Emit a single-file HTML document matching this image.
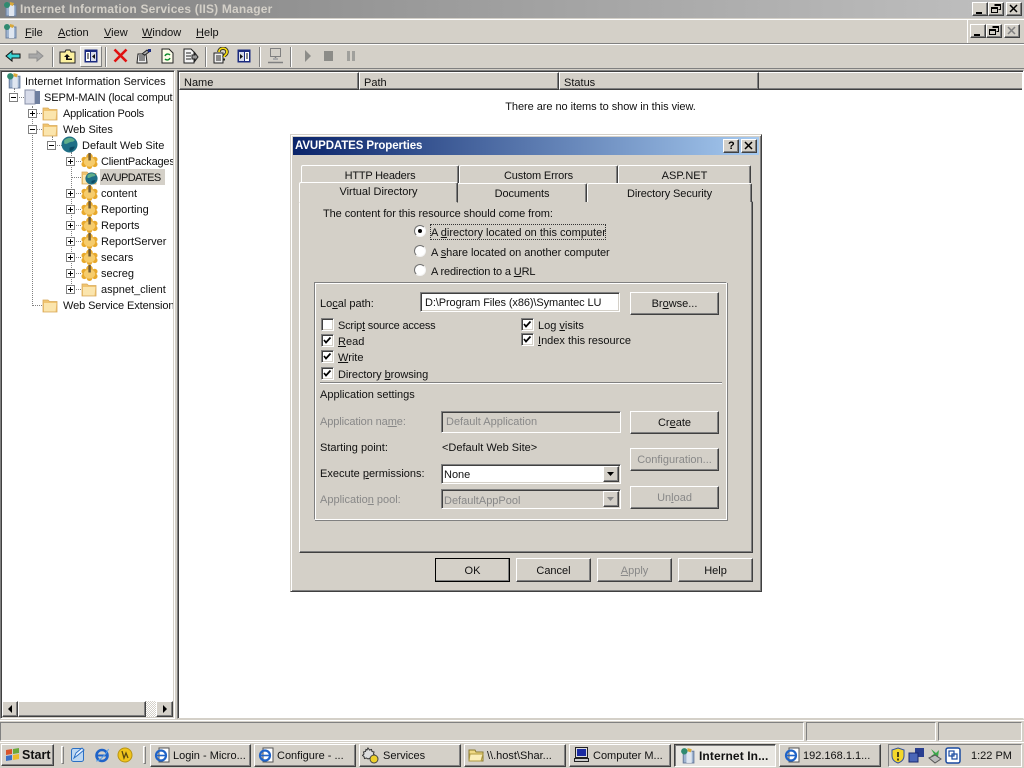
<!DOCTYPE html>
<html><head><meta charset="utf-8"><title>IIS Manager</title>
<style>
*{box-sizing:border-box}
html,body{margin:0;padding:0;width:1024px;height:768px;overflow:hidden;background:#d4d0c8}
body{position:relative;font:11px/13px "Liberation Sans",sans-serif;color:#111}
.a{position:absolute}
.t{position:absolute;white-space:nowrap;line-height:13px}
.g{color:#888}
.c{text-align:center}
.up{position:absolute;background:#d4d0c8;border:1px solid;border-color:#fff #404040 #404040 #fff;box-shadow:inset -1px -1px 0 #808080}
.sunk{position:absolute;border:1px solid;border-color:#808080 #fff #fff #808080;box-shadow:inset 1px 1px 0 #404040,inset -1px -1px 0 #d4d0c8;background:#fff}
.thin{position:absolute;border:1px solid;border-color:#808080 #fff #fff #808080}
.btn{position:absolute;background:#d4d0c8;border:1px solid;border-color:#fff #404040 #404040 #fff;box-shadow:inset -1px -1px 0 #808080;text-align:center;white-space:nowrap}
.chk{position:absolute;width:13px;height:13px;background:#fff;border:1px solid;border-color:#808080 #fff #fff #808080;box-shadow:inset 1px 1px 0 #404040,inset -1px -1px 0 #d4d0c8}
.chk svg{position:absolute;left:0;top:0}
.rad{position:absolute;width:12px;height:12px;border-radius:50%;background:#fff;border:1px solid;border-color:#707070 #f4f4f4 #f4f4f4 #707070}
.rad i{position:absolute;left:3px;top:3px;width:4px;height:4px;background:#000;border-radius:50%}
.tab{position:absolute;background:#d4d0c8;border-top:1px solid #fff;border-left:1px solid #fff;border-right:1px solid #404040;box-shadow:inset -1px 0 0 #808080;border-radius:2px 2px 0 0;text-align:center;white-space:nowrap}
.head{position:absolute;top:72px;height:18px;background:#d4d0c8;border:1px solid;border-color:#fff #404040 #404040 #fff;box-shadow:inset -1px -1px 0 #808080;padding:4px 0 0 4px}
.task{position:absolute;top:744px;height:23px;background:#d4d0c8;border:1px solid;border-color:#fff #404040 #404040 #fff;box-shadow:inset -1px -1px 0 #808080;white-space:nowrap;padding:5px 0 0 22px}
.dl{position:absolute;border-left:1px dotted #808080}
.dh{position:absolute;border-top:1px dotted #808080}
.box{position:absolute;width:9px;height:9px;border:1px solid #808080;background:#fff}
.box:before{content:"";position:absolute;left:1px;top:3px;width:5px;height:1px;background:#000}
.box.p:after{content:"";position:absolute;left:3px;top:1px;width:1px;height:5px;background:#000}
.ic{position:absolute}
.wb{position:absolute;width:16px;height:14px;background:#d4d0c8;border:1px solid;border-color:#fff #404040 #404040 #fff;box-shadow:inset -1px -1px 0 #808080}
.wb svg{position:absolute;left:0;top:0}
</style></head><body>
<svg width="0" height="0" style="position:absolute">
<defs>
<symbol id="folder" viewBox="0 0 16 16"><path d="M1 3h5l1.500 1.500H15V15H1z" fill="#f0c470" stroke="#d8a95a" stroke-width=".8"/><path d="M2 6h12.500l-1 8.500H2z" fill="#fbe5ad"/></symbol>
<symbol id="gear" viewBox="0 0 18 18"><g fill="#e8a92c"><circle cx="3.500" cy="8" r="3"/><circle cx="14.500" cy="8" r="3"/><circle cx="3.500" cy="13" r="3"/><circle cx="14.500" cy="13" r="3"/><circle cx="9" cy="15" r="3"/><circle cx="9" cy="5" r="3.500"/></g><ellipse cx="9" cy="10.500" rx="6" ry="5" fill="#f6cc6c"/><rect x="7.800" y="1" width="2.600" height="8" fill="#6f5a34"/></symbol>
<symbol id="globe" viewBox="0 0 16 16"><circle cx="8" cy="8" r="7.500" fill="#1f6f86"/><path d="M3 4c3-3 8-3 10 0-2 2-3 1-5 2S5 8 3 7z" fill="#5fae8a"/><path d="M8 11c2-1 4-1 5-1-1 3-3 4-5 4z" fill="#0d4a63"/></symbol>
<symbol id="iis" viewBox="0 0 16 16"><rect x="4" y="4" width="10" height="11" fill="#9fb4d0" stroke="#6b7f9f"/><rect x="7" y="4" width="5" height="11" fill="#dfe6f0"/><circle cx="5" cy="4" r="3" fill="#2f8a70"/><path d="M8 1l4 1-1 3-3-1z" fill="#d9a93a"/></symbol>
<symbol id="ie" viewBox="0 0 16 16"><rect x="5" y="1" width="10" height="14" fill="#fff" stroke="#555"/><circle cx="7" cy="8.500" r="5" fill="none" stroke="#1f63c8" stroke-width="2.200"/><path d="M2.500 8.500h9" stroke="#1f63c8" stroke-width="1.600"/></symbol>
<symbol id="arr" viewBox="0 0 8 8"><path d="M2 0v8l4-4z" fill="#000"/></symbol>
<symbol id="down" viewBox="0 0 8 5"><path d="M0 0h7L3.500 4z"/></symbol>
</defs></svg>

<!-- title bar -->
<div class="a" style="left:0;top:0;width:1024px;height:18px;background:linear-gradient(90deg,#808080,#c0c0c0)"></div>
<svg class="ic" style="left:2px;top:1px" width="16" height="16"><use href="#iis"/></svg>
<div class="t" style="left:20px;top:3px;font-weight:bold;font-size:12px;color:#d4d0c8;letter-spacing:.18px">Internet Information Services (IIS) Manager</div>
<div class="wb" style="left:972px;top:2px"><svg width="14" height="12"><path d="M3 9h6v2H3z" fill="#000"/></svg></div>
<div class="wb" style="left:988px;top:2px"><svg width="14" height="12"><path d="M5.500 1.500h6v5h-2M2.500 4.500h6v5h-6zM2.500 5.500h6M5.500 2.500h6" fill="none" stroke="#000"/></svg></div>
<div class="wb" style="left:1006px;top:2px"><svg width="14" height="12"><path d="M3 2l7 7M10 2l-7 7" stroke="#000" stroke-width="1.500"/></svg></div>

<!-- menu -->
<div class="a" style="left:0;top:19px;width:1024px;height:25px;border-top:1px solid #fff;border-bottom:1px solid #808080"></div>
<svg class="ic" style="left:2px;top:23px" width="16" height="16"><use href="#iis"/></svg>
<div class="t" style="left:25px;top:27px"><u>F</u>ile</div>
<div class="t" style="left:58px;top:27px"><u>A</u>ction</div>
<div class="t" style="left:104px;top:27px"><u>V</u>iew</div>
<div class="t" style="left:142px;top:27px"><u>W</u>indow</div>
<div class="t" style="left:196px;top:27px"><u>H</u>elp</div>
<div class="wb" style="left:970px;top:24px"><svg width="14" height="12"><path d="M3 9h6v2H3z" fill="#000"/></svg></div>
<div class="wb" style="left:986px;top:24px"><svg width="14" height="12"><path d="M5.500 1.500h6v5h-2M2.500 4.500h6v5h-6zM2.500 5.500h6M5.500 2.500h6" fill="none" stroke="#000"/></svg></div>
<div class="wb" style="left:1004px;top:24px"><svg width="14" height="12"><path d="M3 2l7 7M10 2l-7 7" stroke="#808080" stroke-width="1.500"/></svg></div>
<div class="a" style="left:967px;top:20px;width:1px;height:23px;background:#fff"></div>

<!-- toolbar -->
<div class="a" style="left:0;top:44px;width:1024px;height:25px;border-top:1px solid #fff;border-bottom:1px solid #808080"></div>
<svg class="ic" style="left:5px;top:49px" width="16" height="14"><path d="M1 7l6-5v3h8v4H7v3z" fill="#3cd5d5" stroke="#111"/></svg>
<svg class="ic" style="left:28px;top:49px" width="16" height="14"><path d="M15 7L9 2v3H1v4h8v3z" fill="#a8a8a8" stroke="#909090"/></svg>
<div class="a" style="left:52px;top:47px;width:2px;height:20px;border-left:1px solid #808080;border-right:1px solid #fff"></div>
<svg class="ic" style="left:59px;top:48px" width="17" height="16"><path d="M1 4h5l1-2h4l1 2h4v11H1z" fill="#fdf2a0" stroke="#222"/><path d="M8 6l-3 3h2v3h6v-1.500H9V9h2z" fill="#111"/></svg>
<div class="a" style="left:80px;top:46px;width:22px;height:21px;border:1px solid;border-color:#fff #808080 #808080 #fff;background:#e9e7e2"></div>
<svg class="ic" style="left:84px;top:49px" width="14" height="14"><rect x=".5" y=".5" width="13" height="13" fill="#1a2a80"/><rect x="2" y="3" width="4" height="9" fill="#fff"/><rect x="7" y="3" width="5" height="9" fill="#d8dcea"/><path d="M11 5v5L8 7.500z" fill="#111"/><path d="M3 5h2M3 7h2M3 9h2" stroke="#111"/></svg>
<div class="a" style="left:105px;top:47px;width:2px;height:20px;border-left:1px solid #808080;border-right:1px solid #fff"></div>
<svg class="ic" style="left:113px;top:48px" width="15" height="15"><path d="M1.500 1.500l12 12M13.500 1.500l-12 12" stroke="#e01010" stroke-width="2.600"/></svg>
<svg class="ic" style="left:136px;top:48px" width="16" height="16"><path d="M2 6h8l1 9H1z" fill="#eee" stroke="#222"/><path d="M3 8h6M3 10h6M3 12h6" stroke="#222"/><path d="M6 6l5-4 2 2-4 3z" fill="#aaa" stroke="#222"/><rect x="12" y="1" width="3" height="3" fill="#1a2a80"/></svg>
<svg class="ic" style="left:161px;top:48px" width="13" height="16"><path d="M1 1h7l4 4v10H1z" fill="#fbfbe8" stroke="#222"/><path d="M4 8a3 3 0 0 1 5-1M9 10a3 3 0 0 1-5 1" fill="none" stroke="#0a8a2a" stroke-width="1.400"/></svg>
<svg class="ic" style="left:183px;top:48px" width="16" height="16"><path d="M1 1h7l3 3v11H1z" fill="#f4f4f4" stroke="#222"/><path d="M3 5h5M3 8h5M3 11h5" stroke="#222"/><path d="M9 7h3V5l3 4-3 4v-2H9z" fill="#999" stroke="#222"/></svg>
<div class="a" style="left:205px;top:47px;width:2px;height:20px;border-left:1px solid #808080;border-right:1px solid #fff"></div>
<svg class="ic" style="left:213px;top:47px" width="16" height="17"><path d="M1 6h9v10H1z" fill="#eee" stroke="#222"/><path d="M3 9h5M3 11h5M3 13h5" stroke="#222"/><path d="M6 5c0-5 8-5 8 0 0 3-3 3-3 5" fill="none" stroke="#222" stroke-width="3.400"/><path d="M6 5c0-5 8-5 8 0 0 3-3 3-3 5" fill="none" stroke="#f4d90f" stroke-width="1.800"/><rect x="10" y="11.500" width="2" height="2" fill="#222"/></svg>
<svg class="ic" style="left:237px;top:49px" width="14" height="14"><rect x=".5" y=".5" width="13" height="13" fill="#1a2a80"/><rect x="2" y="3" width="5" height="9" fill="#d8dcea"/><rect x="8" y="3" width="4" height="9" fill="#fff"/><path d="M3 5v5l3-2.500z" fill="#111"/><path d="M9 5h2M9 7h2M9 9h2" stroke="#111"/></svg>
<div class="a" style="left:259px;top:47px;width:2px;height:20px;border-left:1px solid #808080;border-right:1px solid #fff"></div>
<svg class="ic" style="left:267px;top:48px" width="17" height="16"><rect x="3.500" y=".5" width="10" height="8" fill="#d4d0c8" stroke="#808080"/><path d="M8.500 9v3M1 14.500h15" stroke="#808080" stroke-width="1.500"/><rect x="6" y="10" width="5" height="2" fill="#aaa"/></svg>
<div class="a" style="left:290px;top:47px;width:2px;height:20px;border-left:1px solid #808080;border-right:1px solid #fff"></div>
<svg class="ic" style="left:304px;top:49px" width="8" height="14"><path d="M1 1v12l6-6z" fill="#8c8c88"/></svg>
<div class="a" style="left:324px;top:51px;width:9px;height:10px;background:#8c8c88"></div>
<div class="a" style="left:347px;top:51px;width:3px;height:10px;background:#a0a09c"></div>
<div class="a" style="left:352px;top:51px;width:3px;height:10px;background:#a0a09c"></div>

<!-- left pane -->
<div class="a" style="left:0;top:70px;width:175px;height:649px;background:#fff;border:1px solid;border-color:#808080 #fff #fff #808080;box-shadow:inset 1px 1px 0 #404040,inset -1px -1px 0 #d4d0c8"></div>
<div class="dl" style="left:14px;top:88px;height:10px"></div>
<div class="dl" style="left:32px;top:106px;height:200px"></div>
<div class="dl" style="left:52px;top:136px;height:10px"></div>
<div class="dl" style="left:71px;top:152px;height:138px"></div>
<div class="dh" style="left:14px;top:97px;width:10px"></div>
<div class="dh" style="left:32px;top:113px;width:10px"></div>
<div class="dh" style="left:32px;top:129px;width:10px"></div>
<div class="dh" style="left:52px;top:145px;width:10px"></div>
<div class="dh" style="left:32px;top:305px;width:10px"></div>
<div class="dh" style="left:71px;top:161px;width:10px"></div>
<div class="dh" style="left:71px;top:177px;width:10px"></div>
<div class="dh" style="left:71px;top:193px;width:10px"></div>
<div class="dh" style="left:71px;top:209px;width:10px"></div>
<div class="dh" style="left:71px;top:225px;width:10px"></div>
<div class="dh" style="left:71px;top:241px;width:10px"></div>
<div class="dh" style="left:71px;top:257px;width:10px"></div>
<div class="dh" style="left:71px;top:273px;width:10px"></div>
<div class="dh" style="left:71px;top:289px;width:10px"></div>
<div class="box" style="left:9px;top:93px"></div>
<div class="box p" style="left:28px;top:109px"></div>
<div class="box" style="left:28px;top:125px"></div>
<div class="box" style="left:47px;top:141px"></div>
<div class="box p" style="left:66px;top:157px"></div>
<div class="box p" style="left:66px;top:189px"></div>
<div class="box p" style="left:66px;top:205px"></div>
<div class="box p" style="left:66px;top:221px"></div>
<div class="box p" style="left:66px;top:237px"></div>
<div class="box p" style="left:66px;top:253px"></div>
<div class="box p" style="left:66px;top:269px"></div>
<div class="box p" style="left:66px;top:285px"></div>
<svg class="ic" style="left:5px;top:72px" width="17" height="17"><use href="#iis"/></svg>
<svg class="ic" style="left:24px;top:89px" width="17" height="16"><rect x="1" y="1" width="10" height="14" fill="#d8dcea" stroke="#8890a8"/><rect x="11" y="2" width="5" height="13" fill="#6f7f9f"/></svg>
<svg class="ic" style="left:42px;top:105px" width="16" height="16"><use href="#folder"/></svg>
<svg class="ic" style="left:42px;top:121px" width="16" height="16"><use href="#folder"/></svg>
<svg class="ic" style="left:61px;top:136px" width="17" height="17"><use href="#globe"/></svg>
<svg class="ic" style="left:81px;top:152px" width="17" height="17"><use href="#gear"/></svg>
<svg class="ic" style="left:81px;top:169px" width="16" height="16"><use href="#folder"/></svg>
<svg class="ic" style="left:85px;top:172px" width="13" height="13"><use href="#globe"/></svg>
<svg class="ic" style="left:81px;top:184px" width="17" height="17"><use href="#gear"/></svg>
<svg class="ic" style="left:81px;top:200px" width="17" height="17"><use href="#gear"/></svg>
<svg class="ic" style="left:81px;top:216px" width="17" height="17"><use href="#gear"/></svg>
<svg class="ic" style="left:81px;top:232px" width="17" height="17"><use href="#gear"/></svg>
<svg class="ic" style="left:81px;top:248px" width="17" height="17"><use href="#gear"/></svg>
<svg class="ic" style="left:81px;top:264px" width="17" height="17"><use href="#gear"/></svg>
<svg class="ic" style="left:81px;top:281px" width="16" height="16"><use href="#folder"/></svg>
<svg class="ic" style="left:42px;top:297px" width="16" height="16"><use href="#folder"/></svg>
<div class="t" style="left:25px;top:76px">Internet Information Services</div>
<div class="a" style="left:44px;top:92px;width:129px;height:13px;overflow:hidden"><div class="t" style="left:0;top:0;letter-spacing:-.1px">SEPM-MAIN (local computer)</div></div>
<div class="t" style="left:63px;top:108px;letter-spacing:-.2px">Application Pools</div>
<div class="t" style="left:63px;top:124px">Web Sites</div>
<div class="t" style="left:82px;top:140px">Default Web Site</div>
<div class="a" style="left:101px;top:156px;width:72px;height:13px;overflow:hidden"><div class="t" style="left:0;top:0;letter-spacing:-.2px">ClientPackages</div></div>
<div class="a" style="left:100px;top:169px;width:65px;height:16px;background:#d4d0c8"></div>
<div class="t" style="left:101px;top:172px;letter-spacing:-.6px">AVUPDATES</div>
<div class="t" style="left:101px;top:188px">content</div>
<div class="t" style="left:101px;top:204px">Reporting</div>
<div class="t" style="left:101px;top:220px">Reports</div>
<div class="t" style="left:101px;top:236px">ReportServer</div>
<div class="t" style="left:101px;top:252px">secars</div>
<div class="t" style="left:101px;top:268px">secreg</div>
<div class="t" style="left:101px;top:284px">aspnet_client</div>
<div class="a" style="left:63px;top:300px;width:110px;height:13px;overflow:hidden"><div class="t" style="left:0;top:0;letter-spacing:-.1px">Web Service Extensions</div></div>
<!-- h scrollbar -->
<div class="a" style="left:2px;top:701px;width:171px;height:16px;background:repeating-conic-gradient(#fff 0 25%,#d4d0c8 0 50%) 0 0/2px 2px"></div>
<div class="up" style="left:2px;top:701px;width:16px;height:16px"><svg class="ic" style="left:3px;top:3px" width="8" height="8"><path d="M6 0v8L2 4z"/></svg></div>
<div class="up" style="left:18px;top:701px;width:128px;height:16px"></div>
<div class="up" style="left:156px;top:701px;width:17px;height:16px"><svg class="ic" style="left:4px;top:3px" width="8" height="8"><use href="#arr"/></svg></div>

<!-- right pane -->
<div class="a" style="left:177px;top:70px;width:847px;height:649px;background:#fff;border:1px solid;border-color:#808080 #fff #d4d0c8 #808080;box-shadow:inset 1px 1px 0 #404040"></div>
<div class="head" style="left:179px;width:180px">Name</div>
<div class="head" style="left:359px;width:200px">Path</div>
<div class="head" style="left:559px;width:200px">Status</div>
<div class="a" style="left:759px;top:72px;width:263px;height:18px;background:#d4d0c8;border-top:1px solid #fff;border-bottom:1px solid #404040;box-shadow:inset 0 -1px 0 #808080"></div>
<div class="t c" style="left:179px;width:843px;top:101px;letter-spacing:-.05px">There are no items to show in this view.</div>

<!-- status bar -->
<div class="a" style="left:0;top:720px;width:1024px;height:1px;background:#fff"></div>
<div class="thin" style="left:0;top:722px;width:804px;height:19px"></div>
<div class="thin" style="left:806px;top:722px;width:130px;height:19px"></div>
<div class="thin" style="left:938px;top:722px;width:84px;height:19px"></div>

<!-- dialog -->
<div class="a" style="left:290px;top:134px;width:472px;height:458px;background:#d4d0c8;border:1px solid;border-color:#d4d0c8 #404040 #404040 #d4d0c8;box-shadow:inset 1px 1px 0 #fff,inset -1px -1px 0 #808080"></div>
<div class="a" style="left:293px;top:137px;width:466px;height:18px;background:linear-gradient(90deg,#0a246a,#a6caf0)"></div>
<div class="t" style="left:295px;top:140px;color:#fff;font-weight:bold;font-size:11.500px;letter-spacing:-.1px">AVUPDATES Properties</div>
<div class="wb" style="left:723px;top:139px"><div class="t" style="left:4px;top:0;font-weight:bold;font-size:11px;color:#000">?</div></div>
<div class="wb" style="left:741px;top:139px"><svg width="14" height="12"><path d="M3 2l7 7M10 2l-7 7" stroke="#000" stroke-width="1.500"/></svg></div>

<div class="tab" style="left:301px;top:165px;width:158px;height:20px;padding-top:4px;letter-spacing:-.2px">HTTP Headers</div>
<div class="tab" style="left:459px;top:165px;width:159px;height:20px;padding-top:4px;letter-spacing:-.15px">Custom Errors</div>
<div class="tab" style="left:618px;top:165px;width:133px;height:20px;padding-top:4px">ASP.NET</div>
<div class="a" style="left:299px;top:201px;width:454px;height:352px;background:#d4d0c8;border:1px solid;border-color:#fff #404040 #404040 #fff;box-shadow:inset -1px -1px 0 #808080"></div>
<div class="tab" style="left:457px;top:183px;width:130px;height:19px;padding-top:4px;letter-spacing:-.1px">Documents</div>
<div class="tab" style="left:587px;top:183px;width:165px;height:19px;padding-top:4px;letter-spacing:-.1px">Directory Security</div>
<div class="tab" style="left:299px;top:182px;width:159px;height:21px;padding-top:3px;border-bottom:1px solid #d4d0c8">Virtual Directory</div>

<div class="t" style="left:323px;top:208px;letter-spacing:-.08px">The content for this resource should come from:</div>
<div class="rad" style="left:414px;top:225px"><i></i></div>
<div class="rad" style="left:414px;top:245px"></div>
<div class="rad" style="left:414px;top:264px"></div>
<div class="a" style="left:430px;top:224px;width:176px;height:16px;border:1px dotted #333"></div>
<div class="t" style="left:431px;top:227px">A <u>d</u>irectory located on this computer</div>
<div class="t" style="left:431px;top:247px;letter-spacing:-.05px">A <u>s</u>hare located on another computer</div>
<div class="t" style="left:431px;top:266px;letter-spacing:-.15px">A redirection to a <u>U</u>RL</div>

<div class="a" style="left:314px;top:282px;width:413px;height:238px;border:1px solid;border-color:#808080 #fff #fff #808080;box-shadow:inset 1px 1px 0 #fff,1px 1px 0 #808080"></div>

<div class="t" style="left:320px;top:298px">Lo<u>c</u>al path:</div>
<div class="sunk" style="left:420px;top:292px;width:200px;height:20px"></div>
<div class="t" style="left:425px;top:297px;letter-spacing:-.1px">D:\Program Files (x86)\Symantec LU</div>
<div class="btn" style="left:630px;top:292px;width:89px;height:23px;padding-top:5px">Br<u>o</u>wse...</div>

<div class="chk" style="left:321px;top:318px"></div>
<div class="chk" style="left:321px;top:334px"><svg width="11" height="11"><path d="M2 5l2 2.500L8.500 2.500" fill="none" stroke="#000" stroke-width="1.700"/></svg></div>
<div class="chk" style="left:321px;top:350px"><svg width="11" height="11"><path d="M2 5l2 2.500L8.500 2.500" fill="none" stroke="#000" stroke-width="1.700"/></svg></div>
<div class="chk" style="left:321px;top:367px"><svg width="11" height="11"><path d="M2 5l2 2.500L8.500 2.500" fill="none" stroke="#000" stroke-width="1.700"/></svg></div>
<div class="chk" style="left:521px;top:318px"><svg width="11" height="11"><path d="M2 5l2 2.500L8.500 2.500" fill="none" stroke="#000" stroke-width="1.700"/></svg></div>
<div class="chk" style="left:521px;top:333px"><svg width="11" height="11"><path d="M2 5l2 2.500L8.500 2.500" fill="none" stroke="#000" stroke-width="1.700"/></svg></div>
<div class="t" style="left:338px;top:320px;letter-spacing:-.2px">Scrip<u>t</u> source access</div>
<div class="t" style="left:338px;top:336px"><u>R</u>ead</div>
<div class="t" style="left:338px;top:352px"><u>W</u>rite</div>
<div class="t" style="left:338px;top:369px;letter-spacing:-.05px">Directory <u>b</u>rowsing</div>
<div class="t" style="left:538px;top:320px">Log <u>v</u>isits</div>
<div class="t" style="left:538px;top:335px"><u>I</u>ndex this resource</div>

<div class="a" style="left:320px;top:382px;width:402px;height:2px;border-top:1px solid #808080;border-bottom:1px solid #fff"></div>
<div class="t" style="left:320px;top:389px">Application settings</div>

<div class="t g" style="left:320px;top:416px;letter-spacing:-.1px">Application na<u>m</u>e:</div>
<div class="sunk" style="left:441px;top:411px;width:180px;height:22px;background:#d4d0c8;box-shadow:inset 1px 1px 0 #404040"></div>
<div class="t g" style="left:446px;top:416px">Default Application</div>
<div class="btn" style="left:630px;top:411px;width:89px;height:23px;padding-top:5px">Cr<u>e</u>ate</div>

<div class="t" style="left:320px;top:442px">Starting point:</div>
<div class="t" style="left:442px;top:442px">&lt;Default Web Site&gt;</div>
<div class="btn g" style="left:630px;top:448px;width:89px;height:23px;padding-top:5px">Confi<u>g</u>uration...</div>

<div class="t" style="left:320px;top:468px">Execute <u>p</u>ermissions:</div>
<div class="sunk" style="left:441px;top:464px;width:180px;height:20px"></div>
<div class="t" style="left:444px;top:469px">None</div>
<div class="up" style="left:603px;top:466px;width:16px;height:16px"><svg class="ic" style="left:3px;top:5px" width="8" height="5"><use href="#down"/></svg></div>

<div class="t g" style="left:320px;top:494px">Applicatio<u>n</u> pool:</div>
<div class="sunk" style="left:441px;top:489px;width:180px;height:20px;background:#d4d0c8"></div>
<div class="t g" style="left:444px;top:495px">DefaultAppPool</div>
<div class="up" style="left:603px;top:491px;width:16px;height:16px"><svg class="ic" style="left:3px;top:5px" width="8" height="5" fill="#888"><use href="#down"/></svg></div>
<div class="btn g" style="left:630px;top:486px;width:89px;height:23px;padding-top:5px">Un<u>l</u>oad</div>

<div class="btn" style="left:435px;top:558px;width:75px;height:24px;padding-top:6px;outline:1px solid #000;outline-offset:-1px">OK</div>
<div class="btn" style="left:516px;top:558px;width:75px;height:24px;padding-top:6px">Cancel</div>
<div class="btn g" style="left:597px;top:558px;width:75px;height:24px;padding-top:6px"><u>A</u>pply</div>
<div class="btn" style="left:678px;top:558px;width:75px;height:24px;padding-top:6px">Help</div>

<!-- taskbar -->
<div class="a" style="left:0;top:742px;width:1024px;height:26px;background:#d4d0c8;border-top:1px solid #fff"></div>
<div class="up" style="left:1px;top:744px;width:53px;height:22px"></div>
<svg class="ic" style="left:5px;top:747px" width="16" height="16"><path d="M1 3l6-1v5l-6 1z" fill="#d8532a"/><path d="M8 2l6-1v5l-6 1z" fill="#6aa83a"/><path d="M1 9l6-1v5l-6 1z" fill="#3b6fc4"/><path d="M8 8l6-1v5l-6 1z" fill="#eebb2a"/></svg>
<div class="t" style="left:22px;top:749px;font-weight:bold;font-size:12.500px;letter-spacing:0">Start</div>
<div class="a" style="left:61px;top:746px;width:3px;height:18px;border:1px solid;border-color:#fff #808080 #808080 #fff"></div>
<svg class="ic" style="left:70px;top:746px" width="16" height="18"><rect x="1.500" y="2.500" width="12" height="13" rx="2" fill="#bcd7f2" stroke="#2a6fc4"/><path d="M4 12l2-5 6-5 2 2-6 5z" fill="#e8f2ff" stroke="#2a6fc4"/></svg>
<svg class="ic" style="left:94px;top:747px" width="16" height="16"><circle cx="8" cy="8.500" r="5.500" fill="none" stroke="#1f63c8" stroke-width="2.600"/><path d="M2 8.500h11" stroke="#1f63c8" stroke-width="2"/><path d="M2 14C6 14 13 6 14.500 2" fill="none" stroke="#5aa0e8"/></svg>
<svg class="ic" style="left:117px;top:747px" width="16" height="16"><circle cx="8" cy="8" r="7" fill="#f0c41c" stroke="#b89414"/><path d="M5 4l2 7 2-5 2 5" fill="none" stroke="#5a4a10" stroke-width="1.300"/></svg>
<div class="a" style="left:143px;top:746px;width:3px;height:18px;border:1px solid;border-color:#fff #808080 #808080 #fff"></div>

<div class="task" style="left:150px;width:101px">Login - Micro...</div>
<div class="task" style="left:254px;width:102px">Configure - ...</div>
<div class="task" style="left:359px;width:102px;padding-left:23px">Services</div>
<div class="task" style="left:464px;width:102px;padding-left:22px">\\.host\Shar...</div>
<div class="task" style="left:569px;width:102px;padding-left:23px">Computer M...</div>
<div class="task" style="left:674px;width:102px;padding:5px 0 0 24px;font-weight:bold;font-size:12px;letter-spacing:.1px;border-color:#404040 #fff #fff #404040;background:#e9e7e2;box-shadow:inset 1px 1px 0 #808080">Internet In...</div>
<div class="task" style="left:779px;width:102px;padding-left:23px">192.168.1.1...</div>
<svg class="ic" style="left:154px;top:747px" width="16" height="16"><use href="#ie"/></svg>
<svg class="ic" style="left:258px;top:747px" width="16" height="16"><use href="#ie"/></svg>
<svg class="ic" style="left:362px;top:747px" width="18" height="17"><path d="M6 1l1.500 2 2-.5.500 2 2 .5-.5 2 1.500 1.500-2 1-.5 2-2-.5L6 12l-1.500-1-2 .5-.5-2-1.500-1L2 7 1.500 5l2-.5L4 2.500l1 .500z" fill="#ddd" stroke="#333"/><circle cx="12" cy="12" r="4" fill="#eed02a" stroke="#444"/></svg>
<svg class="ic" style="left:468px;top:747px" width="17" height="16"><path d="M1 3h6l1 2h7v9H1z" fill="#f0d985" stroke="#8a7a30"/><path d="M2 7h13l-2 7H1z" fill="#fbeeb8" stroke="#b09a40"/></svg>
<svg class="ic" style="left:573px;top:746px" width="17" height="17"><rect x="2.500" y="1.500" width="12" height="10" fill="#ddd" stroke="#222"/><rect x="4" y="3" width="9" height="7" fill="#1a2aa0"/><rect x="1.500" y="12.500" width="14" height="3" fill="#ccc" stroke="#222"/></svg>
<svg class="ic" style="left:679px;top:747px" width="17" height="17"><use href="#iis"/></svg>
<svg class="ic" style="left:784px;top:747px" width="16" height="16"><use href="#ie"/></svg>

<div class="thin" style="left:888px;top:744px;width:134px;height:23px"></div>
<svg class="ic" style="left:890px;top:747px" width="16" height="17"><path d="M8 1l6 2v6c0 4-3 6-6 7-3-1-6-3-6-7V3z" fill="#f4d72a" stroke="#3050a0"/><path d="M8 5v5M8 11.500v2" stroke="#111" stroke-width="1.500"/></svg>
<svg class="ic" style="left:908px;top:747px" width="17" height="17"><rect x="7" y="1" width="9" height="9" fill="#2a3f90"/><rect x="1" y="6" width="9" height="9" fill="#4a66b8" stroke="#1a2a70"/></svg>
<svg class="ic" style="left:926px;top:747px" width="17" height="17"><path d="M5 2l5 4 3-3-1 7-7-1 3-2z" fill="#3aa84a"/><path d="M3 11l6-3 6 4-6 4z" fill="#bbb" stroke="#555"/></svg>
<svg class="ic" style="left:945px;top:747px" width="16" height="17"><rect x="1" y="1" width="14" height="15" rx="2" fill="#fff" stroke="#1a4aa0" stroke-width="1.500"/><rect x="4" y="4" width="5" height="5" fill="none" stroke="#1a4aa0" stroke-width="1.200"/><rect x="7" y="7" width="5" height="5" fill="none" stroke="#1a4aa0" stroke-width="1.200"/></svg>
<div class="t" style="left:971px;top:750px">1:22 PM</div>
</body></html>
